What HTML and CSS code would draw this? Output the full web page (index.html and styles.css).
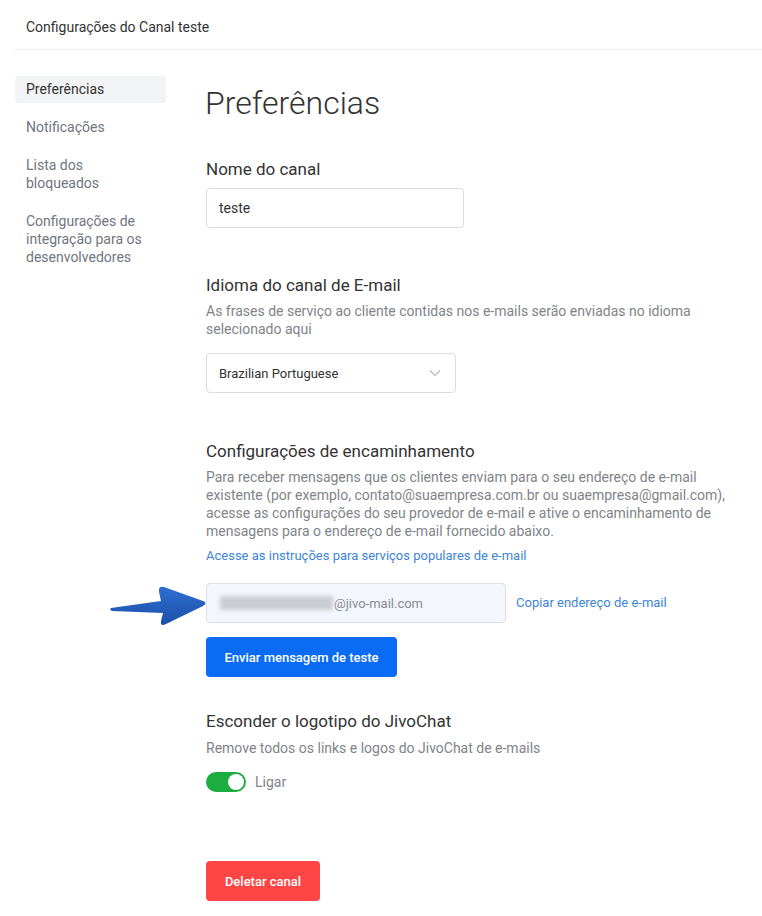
FILE: index.html
```html
<!DOCTYPE html>
<html lang="pt">
<head>
<meta charset="utf-8">
<link rel="stylesheet" href="styles.css">
</head>
<body>
<header class="top">Configurações do Canal teste</header>
<div class="layout">
  <nav class="side">
    <a class="side-item active">Preferências</a>
    <a class="side-item">Notificações</a>
    <a class="side-item">Lista dos bloqueados</a>
    <a class="side-item">Configurações de integração para os desenvolvedores</a>
  </nav>
  <main class="main">
    <h1 class="title">Preferências</h1>

    <section class="sec sec-name">
      <h2 class="label">Nome do canal</h2>
      <div class="input">teste</div>
    </section>

    <section class="sec sec-lang">
      <h2 class="label">Idioma do canal de E-mail</h2>
      <p class="desc">As frases de serviço ao cliente contidas nos e-mails serão enviadas no idioma selecionado aqui</p>
      <div class="select">
        <span>Brazilian Portuguese</span>
        <svg class="chev" width="12" height="8" viewBox="0 0 12 8"><path d="M1 1.5l5 5 5-5" fill="none" stroke="#b5b9bf" stroke-width="1.2"/></svg>
      </div>
    </section>

    <section class="sec sec-fwd">
      <h2 class="label">Configurações de encaminhamento</h2>
      <p class="desc">Para receber mensagens que os clientes enviam para o seu endereço de e-mail<br>existente (por exemplo, contato@suaempresa.com.br ou suaempresa@gmail.com),<br>acesse as configurações do seu provedor de e-mail e ative o encaminhamento de<br>mensagens para o endereço de e-mail fornecido abaixo.</p>
      <a class="link">Acesse as instruções para serviços populares de e-mail</a>
      <div class="email-row">
        <svg class="arrow" width="100" height="48" viewBox="0 0 100 48">
          <defs>
            <linearGradient id="ag" x1="0" y1="0" x2="0" y2="1">
              <stop offset="0" stop-color="#2f6fd0"/>
              <stop offset="1" stop-color="#1a4fa8"/>
            </linearGradient>
          </defs>
          <path d="M2 27 L52 20 L50 11 Q49 5 55 6 L94 20 Q99 22 94 25 L57 43 Q51 46 52 40 L54 32 L3 30 Q0 28.5 2 27 Z" fill="url(#ag)"/>
        </svg>
        <div class="email"><span class="blur"></span>@jivo-mail.com</div>
        <a class="link copy">Copiar endereço de e-mail</a>
      </div>
      <button class="btn btn-blue">Enviar mensagem de teste</button>
    </section>

    <section class="sec sec-logo">
      <h2 class="label">Esconder o logotipo do JivoChat</h2>
      <p class="desc">Remove todos os links e logos do JivoChat de e-mails</p>
      <div class="toggle-row">
        <span class="toggle"><span class="knob"></span></span>
        <span class="toggle-label">Ligar</span>
      </div>
    </section>

    <button class="btn btn-red">Deletar canal</button>
  </main>
</div>
</body>
</html>
```

FILE: styles.css
```css
* { box-sizing: border-box; }
html, body { margin: 0; padding: 0; background: #fff; }
body {
  font-family: Roboto, "Liberation Sans", sans-serif;
  color: #333;
  width: 762px;
}
.top {
  margin-left: 15px;
  padding: 19px 0 0 11px;
  height: 50px;
  border-bottom: 1px solid #ececec;
  font-size: 14px;
  color: #333;
}
.layout {
  display: flex;
}
.side {
  width: 151px;
  margin-left: 15px;
  margin-top: 26px;
  display: flex;
  flex-direction: column;
}
.side-item {
  display: block;
  padding: 4px 11px 5px;
  font-size: 14px;
  line-height: 18px;
  color: #707580;
  border-radius: 4px;
}
.side-item + .side-item { margin-top: 11px; }
.side-item.active {
  background: #f3f4f5;
  color: #333;
}
.main {
  margin-left: 39px;
  flex: 1;
  position: relative;
}
.title {
  margin: 35px 0 0 0;
  font-size: 32px;
  font-weight: 300;
  line-height: 36px;
  color: #333;
}
.sec { margin: 0; }
.label {
  margin: 0;
  font-size: 17px;
  font-weight: 400;
  line-height: 22px;
  color: #333;
  padding-left: 1px;
}
.sec-name { margin-top: 37px; }
.sec-name .input { margin-top: 8px; }
.input {
  width: 258px;
  height: 40px;
  margin-left: 1px;
  border: 1px solid #dcdcdc;
  border-radius: 4px;
  padding: 0 12px;
  display: flex;
  align-items: center;
  font-size: 14px;
  color: #333;
}
.sec-lang { margin-top: 46px; }
.desc {
  margin: 6px 0 0 1px;
  font-size: 14px;
  line-height: 18px;
  color: #808488;
  width: 500px;
}
.select {
  margin: 15px 0 0 1px;
  width: 250px;
  height: 40px;
  border: 1px solid #dcdcdc;
  border-radius: 4px;
  padding: 0 12px;
  display: flex;
  align-items: center;
  justify-content: space-between;
  font-size: 13px;
  color: #333;
}
.chev { margin-right: 2px; }
.sec-fwd { margin-top: 47px; }
.sec-fwd .desc { width: 556px; white-space: nowrap; }
.link {
  display: block;
  margin: 7px 0 0 1px;
  font-size: 13px;
  line-height: 18px;
  color: #3d84d6;
  cursor: pointer;
}
.email-row {
  margin-top: 18px;
  display: flex;
  align-items: center;
  position: relative;
}
.arrow {
  position: absolute;
  left: -96px;
  top: -2px;
}
.email {
  margin-left: 1px;
  width: 300px;
  height: 40px;
  border: 1px solid #dcdfe4;
  border-radius: 4px;
  background: #f3f7fd;
  padding: 0 13px;
  display: flex;
  align-items: center;
  font-size: 13px;
  color: #888c92;
}
.blur {
  display: inline-block;
  width: 113px;
  height: 14px;
  background: #c9ccd1;
  filter: blur(2px);
  margin-right: 1px;
}
.copy { margin: 0 0 0 10px; }
.btn {
  display: block;
  border: none;
  border-radius: 4px;
  height: 40px;
  font-family: Roboto, "Liberation Sans", sans-serif;
  font-size: 13px;
  font-weight: 500;
  color: #fff;
  cursor: pointer;
}
.btn-blue {
  margin: 14px 0 0 1px;
  width: 191px;
  background: #0a6cf5;
}
.sec-logo { margin-top: 33px; }
.sec-logo .desc { margin-top: 7px; }
.toggle-row {
  margin: 15px 0 0 1px;
  display: flex;
  align-items: center;
  gap: 9px;
}
.toggle {
  width: 40px;
  height: 20px;
  border-radius: 10px;
  background: #1cac3f;
  position: relative;
  display: inline-block;
}
.knob {
  position: absolute;
  right: 2px;
  top: 2px;
  width: 16px;
  height: 16px;
  border-radius: 50%;
  background: #fff;
}
.toggle-label {
  font-size: 14px;
  color: #808488;
}
.btn-red {
  margin: 69px 0 15px 1px;
  width: 114px;
  background: #fe4545;
}
```
